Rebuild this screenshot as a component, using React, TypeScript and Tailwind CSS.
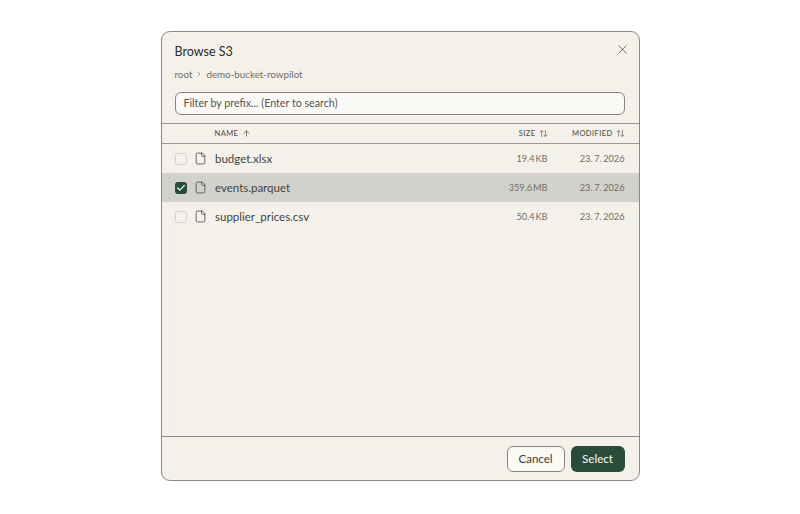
import React from "react";

function FileIcon() {
  return (
    <svg width="13" height="13" viewBox="0 0 24 24" fill="none" stroke="#55544e" strokeWidth="1.6" strokeLinecap="round" strokeLinejoin="round" className="shrink-0">
      <path d="M15 2H6a2 2 0 0 0-2 2v16a2 2 0 0 0 2 2h12a2 2 0 0 0 2-2V7Z" />
      <path d="M14 2v4a2 2 0 0 0 2 2h4" />
    </svg>
  );
}

function SortBoth() {
  return (
    <svg width="9" height="9" viewBox="0 0 24 24" fill="none" stroke="#6b6a63" strokeWidth="2" strokeLinecap="round" strokeLinejoin="round" className="shrink-0">
      <path d="m3 8 4-4 4 4" /><path d="M7 4v16" /><path d="m21 16-4 4-4-4" /><path d="M17 20V4" />
    </svg>
  );
}

function Row({ name, size, date, selected }: { name: string; size: string; date: string; selected?: boolean }) {
  return (
    <div className={`relative flex items-center h-[29px] pl-[13px] pr-[14px] ${selected ? "bg-[#d3d1cb]" : ""}`}>
      {selected ? (
        <div className="w-[12px] h-[12px] rounded-[3px] bg-[#2a4a3a] flex items-center justify-center shrink-0">
          <svg width="10" height="10" viewBox="0 0 24 24" fill="none" stroke="#f5f3ee" strokeWidth="3" strokeLinecap="round" strokeLinejoin="round"><path d="M20 6 9 17l-5-5" /></svg>
        </div>
      ) : (
        <div className="w-[12px] h-[12px] rounded-[3px] border border-[#d3d1ca] bg-[#f4f2ec] shrink-0" />
      )}
      <div className="ml-[7px] w-[21.5px]"><FileIcon /></div>
      <div className="flex-1 text-[11.5px] text-[#45443f]">{name}</div>
      <div className="text-[9.2px] text-[#6f6e67] w-[60px] text-right [word-spacing:-1.5px]">{size}</div>
      <div className="text-[9.2px] text-[#6f6e67] w-[77px] text-right [word-spacing:-0.8px]">{date}</div>
    </div>
  );
}

export default function App() {
  return (
    <div className="w-[800px] h-[514px] bg-white flex items-start justify-center pt-[31px] font-['Lato',sans-serif]">
      <div className="w-[479px] h-[450px] bg-[#f3f1ea] border border-[#8b8a84] rounded-[9px] flex flex-col relative overflow-hidden">
        <button className="absolute right-[11px] top-[12px] text-[#55544e]">
          <svg width="11" height="11" viewBox="0 0 24 24" fill="none" stroke="currentColor" strokeWidth="1.8" strokeLinecap="round"><path d="M20 4 4 20" /><path d="m4 4 16 16" /></svg>
        </button>
        <div className="pl-[13px] pr-[14px] pt-[11px]">
          <h2 className="text-[12.5px] leading-[17px] text-[#2c2b27]">Browse S3</h2>
          <div className="flex items-center mt-[7px] text-[9.8px] leading-[14px] text-[#6f6e67]">
            <span>root</span>
            <svg width="8" height="8" viewBox="0 0 24 24" fill="none" stroke="#77766f" strokeWidth="2" strokeLinecap="round" strokeLinejoin="round" className="mx-[3px]"><path d="m9 18 6-6-6-6" /></svg>
            <span>demo-bucket-rowpilot</span>
          </div>
          <div className="mt-[11px] h-[23px] rounded-[6px] border border-[#85847e] bg-[#faf9f5] flex items-center px-[8px] text-[10.7px] text-[#55544e]">
            Filter by prefix... (Enter to search)
          </div>
        </div>
        <div className="mt-[8px] h-[21px] border-y border-[#9a9993] flex items-center pl-[53px] pr-[14px] text-[7.5px] font-medium tracking-[0.4px] text-[#55544e]">
          <div className="flex-1 flex items-center gap-[4px]">
            NAME
            <svg width="9" height="9" viewBox="0 0 24 24" fill="none" stroke="#55544e" strokeWidth="2" strokeLinecap="round" strokeLinejoin="round"><path d="m5 12 7-7 7 7" /><path d="M12 19V5" /></svg>
          </div>
          <div className="w-[60px] flex items-center justify-end gap-[3px]">SIZE <SortBoth /></div>
          <div className="w-[77px] flex items-center justify-end gap-[3px]">MODIFIED <SortBoth /></div>
        </div>
        <div className="flex-1 flex flex-col relative">
          <div className="absolute left-[12px] top-0 bottom-0 w-px bg-[#eeede6]" />
          <Row name="budget.xlsx" size="19.4 KB" date="23. 7. 2026" />
          <Row name="events.parquet" size="359.6 MB" date="23. 7. 2026" selected />
          <Row name="supplier_prices.csv" size="50.4 KB" date="23. 7. 2026" />
        </div>
        <div className="h-[44px] border-t border-[#8f8e88] flex items-center justify-end gap-[6px] px-[14px]">
          <button className="w-[58px] h-[26px] rounded-[6px] border border-[#85847e] bg-[#faf9f5] text-[11.5px] text-[#3c3b36]">Cancel</button>
          <button className="w-[54px] h-[26px] rounded-[6px] bg-[#2a4a3a] text-[11.5px] font-medium text-[#f5f3ee]">Select</button>
        </div>
      </div>
    </div>
  );
}
